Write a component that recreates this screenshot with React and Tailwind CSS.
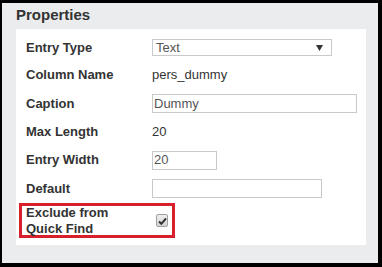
import React from 'react';

const font = { fontFamily: '"Liberation Sans", Arial, sans-serif' };

function Row({ label, children, h = 'h-[28px]' }) {
  return (
    <div className={`mx-[3px] flex ${h} items-center px-[7px]`}>
      <div className="w-[126px] shrink-0 text-[13px] font-bold leading-4 text-[#333]">{label}</div>
      <div className="flex items-center">{children}</div>
    </div>
  );
}

function TextInput({ value, w }) {
  return (
    <div className={`flex h-[19px] ${w} items-center border border-[#c9c9c9] bg-white px-[1px] text-[13px] text-[#555]`}>
      {value}
    </div>
  );
}

export default function App() {
  return (
    <div className="h-[267px] w-[382px] border-t-[3px] border-l-2 border-r-4 border-b-4 border-black bg-[#ebecee]" style={font}>
      <div className="h-[26px] pl-[14px] pt-[3px] text-[15px] font-bold leading-[18px] text-[#333]">Properties</div>
      <div className="ml-[14px] h-[216px] w-[350px] bg-white pt-[5px]">
        <Row label="Entry Type" h="h-[27px]">
          <div className="flex h-[17px] w-[180px] items-center justify-between border border-[#c9c9c9] bg-white pl-[3px] pr-[8px] text-[13px] text-[#555]">
            <span>Text</span>
            <svg width="7" height="6" viewBox="0 0 7 6"><path d="M0 0h7L3.5 6z" fill="#333" /></svg>
          </div>
        </Row>
        <Row label="Column Name">
          <span className="text-[13px] text-[#333]">pers_dummy</span>
        </Row>
        <Row label="Caption" h="h-[29px]">
          <TextInput value="Dummy" w="w-[205px]" />
        </Row>
        <Row label="Max Length">
          <span className="text-[13px] text-[#333]">20</span>
        </Row>
        <Row label="Entry Width" h="h-[28px]">
          <TextInput value="20" w="w-[65px]" />
        </Row>
        <Row label="Default" h="h-[29px]">
          <TextInput value="" w="w-[170px]" />
        </Row>
        <div className="ml-[3px] flex h-[35px] w-[156px] items-center border-[3px] border-[#d7202b] px-[4px]">
          <div className="w-[130px] shrink-0 text-[13px] font-bold leading-4 text-[#333]">
            Exclude from<br />Quick Find
          </div>
          <span className="flex h-[13px] w-[13px] items-center justify-center rounded-[2px] border border-[#a0a0a0] bg-gradient-to-b from-[#eeeeee] to-[#d4d4d4]">
            <svg width="9" height="8" viewBox="0 0 9 8"><path d="M1 4.5l2.3 2.3L8 1.5" stroke="#333" strokeWidth="2" fill="none" /></svg>
          </span>
        </div>
      </div>
    </div>
  );
}
